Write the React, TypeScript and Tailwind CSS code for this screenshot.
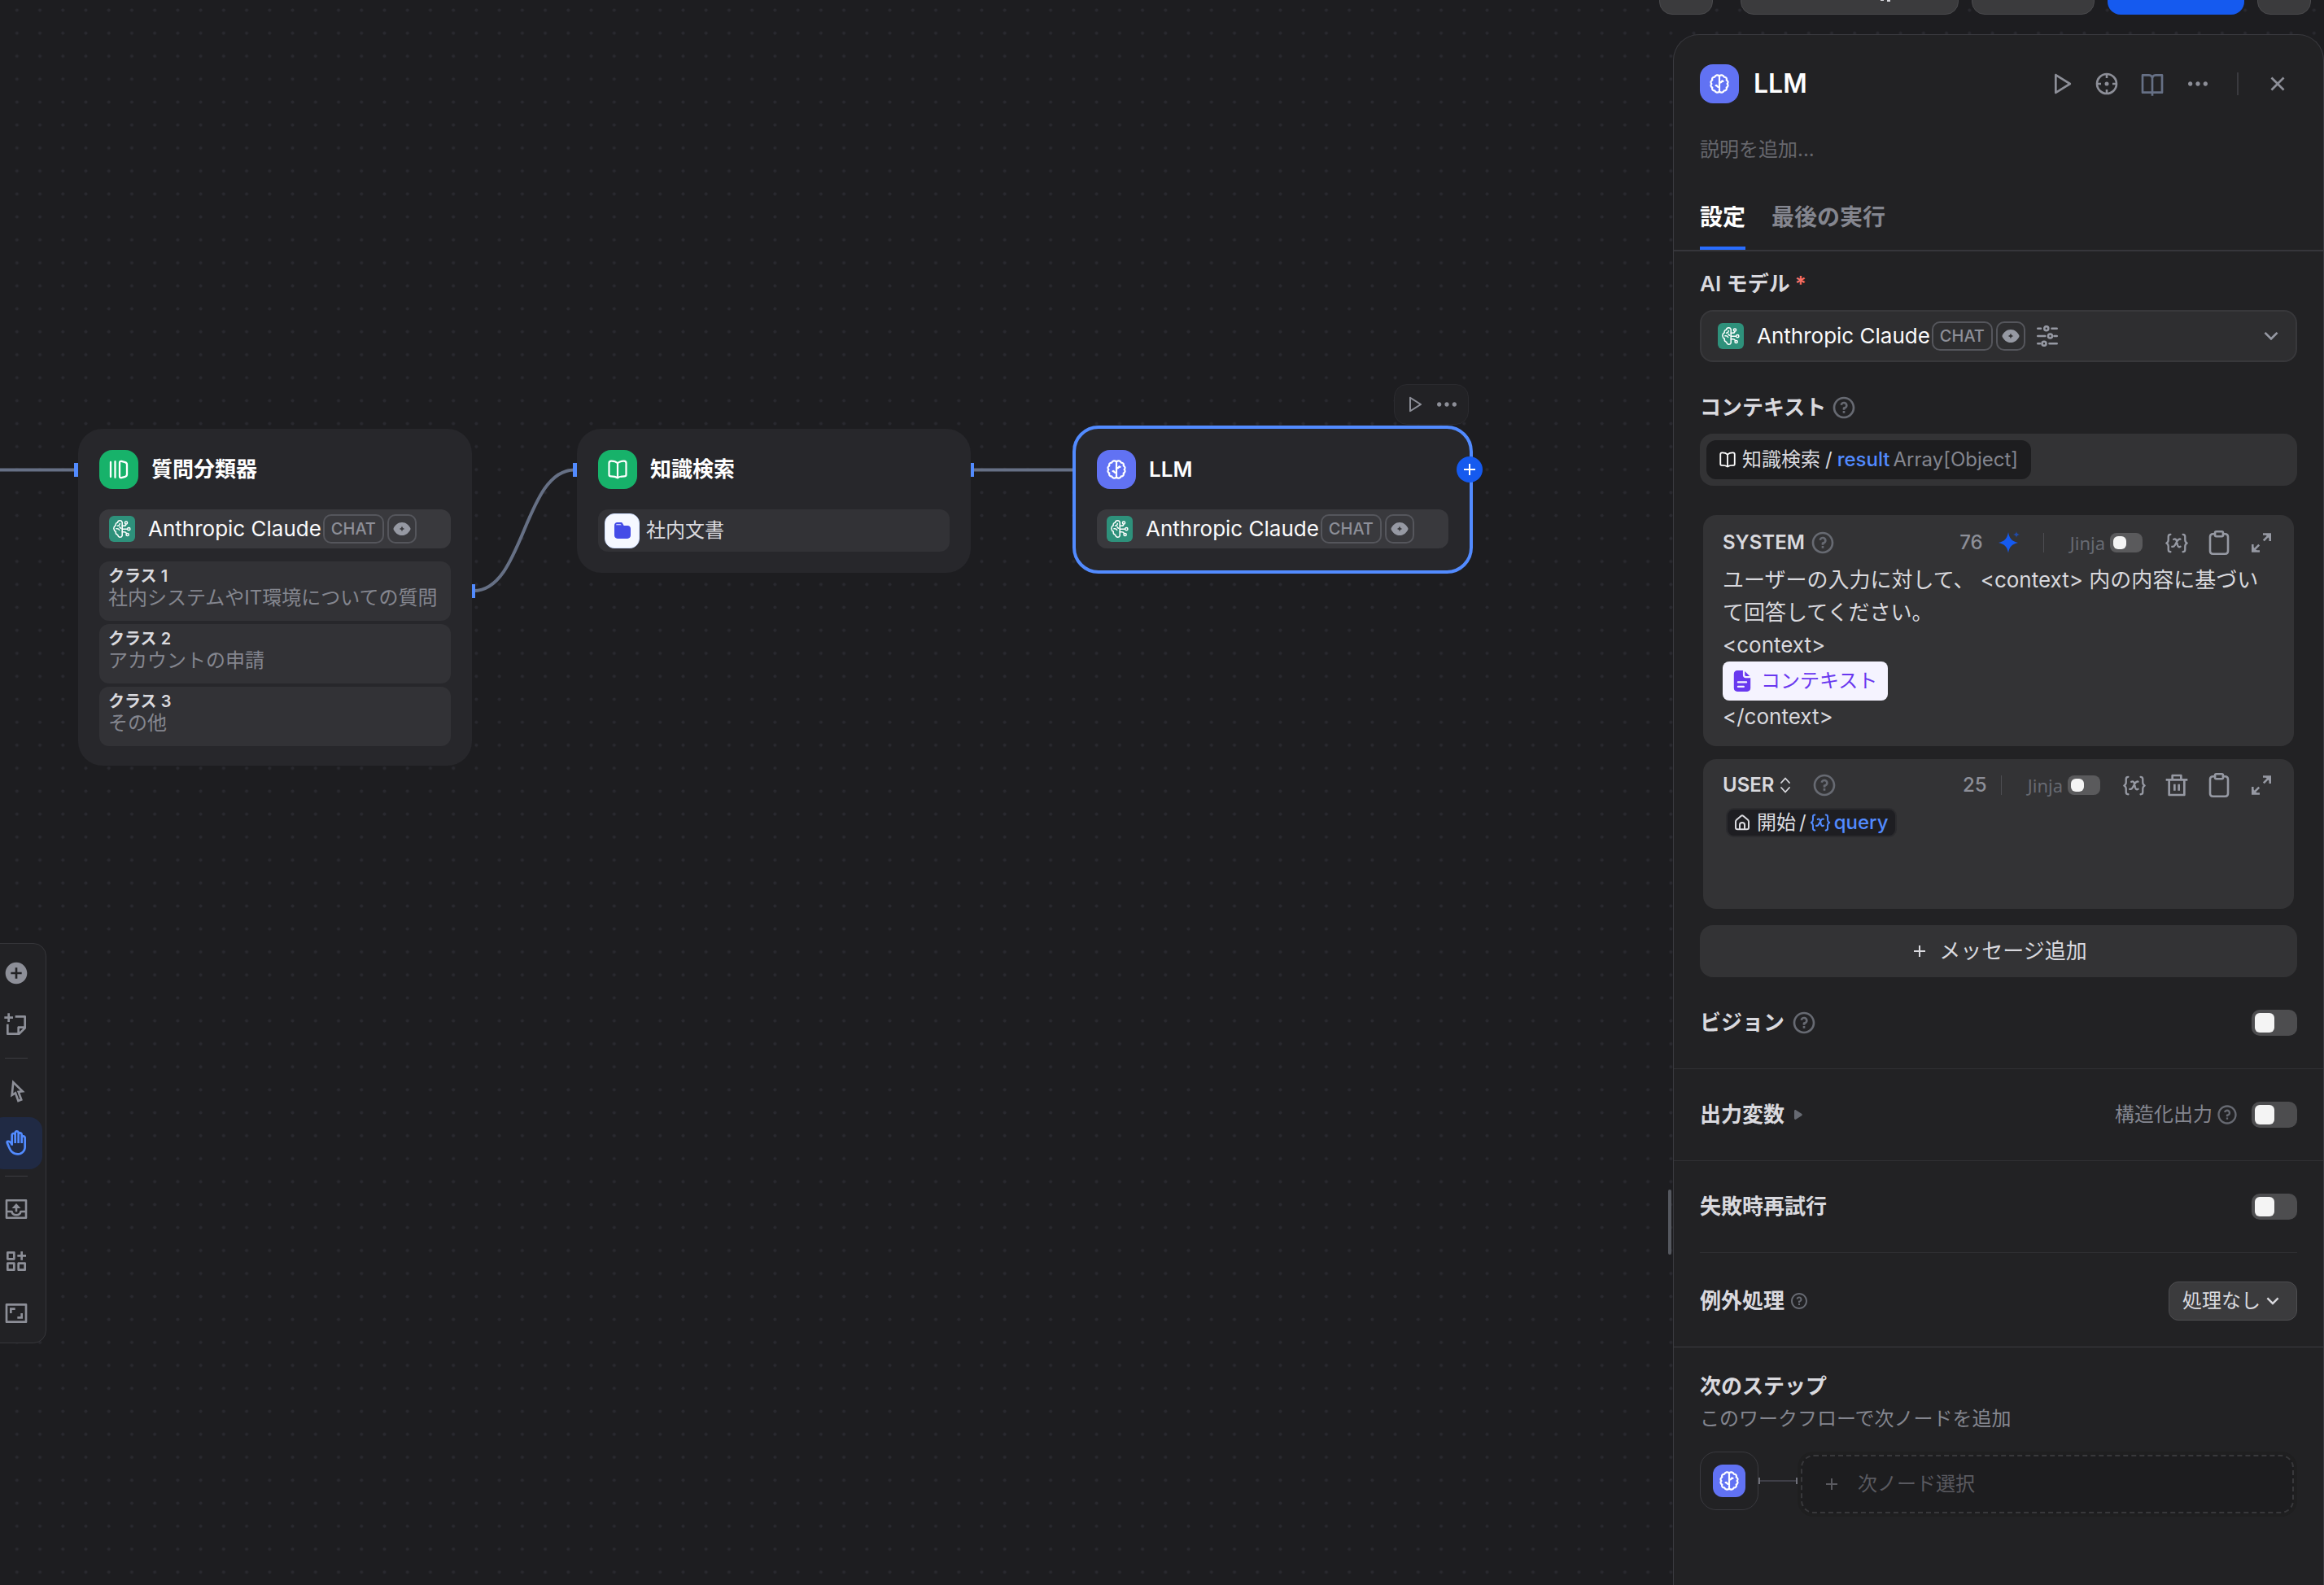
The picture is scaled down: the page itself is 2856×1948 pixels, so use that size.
import React from "react";
import {
  RiAddCircleFill,
  RiAddLine,
  RiArrowDownSLine,
  RiAspectRatioLine,
  RiBookOpenLine,
  RiCloseLine,
  RiCursorLine,
  RiDeleteBinLine,
  RiFunctionAddLine,
  RiHand,
  RiMoreFill,
  RiPlayLargeLine,
  RiQuestionLine,
  RiStickyNoteAddLine,
} from "react-icons/ri";

type IconProps = { className?: string };

function BrainIcon({ className }: IconProps) {
  return (
    <svg viewBox="0 0 24 24" className={className} fill="none" stroke="currentColor" strokeWidth="2.200" strokeLinecap="round" strokeLinejoin="round" aria-hidden="true">
      <path d="M12 2.400C10.200.8 7.200 1 6.200 3.600 3.900 3.500 2.600 5.300 3.300 7.400 1.300 8.200.9 10.600 2.400 12 .9 13.400 1.300 15.800 3.300 16.600c-.7 2.100.6 3.900 2.900 3.800C7.200 23 10.200 23.200 12 21.600c1.800 1.600 4.800 1.400 5.800-1.200 2.300.1 3.600-1.700 2.900-3.800 2-.8 2.400-3.200.9-4.600 1.500-1.400 1.100-3.800-.9-4.600.7-2.100-.6-3.900-2.900-3.800C16.800 1 13.800.8 12 2.400Z" />
      <path d="M12 2.400v19.200M12 10.500c1.700 0 2.900-.8 3.400-2.200M12 16.200c-1.700 0-2.900-.8-3.400-2.200M15.600 8.800h1M7.600 14.200h1" />
    </svg>
  );
}

function ModelIcon({ className }: IconProps) {
  return (
    <svg viewBox="0 0 22 22" className={className} fill="none" stroke="currentColor" strokeWidth="1.500" strokeLinecap="round" strokeLinejoin="round" aria-hidden="true">
      <path d="M11.200 2.800C10.600 1.200 9.600.8 8.500.8 6.800.8 5.700 1.900 5.600 3.200 3.800 3.400 2.800 5 3.200 6.800 1.300 7.600.7 9.300.9 11c.2 1.800 1.200 2.900 2.400 3.300-.4 1.900.7 3.600 2.400 4.100.3 1.700 1.400 2.800 2.900 2.800 1.300 0 2.200-.6 2.600-1.700V2.800Z" />
      <path d="M8.300 4.500c-.2 1.600-1.100 2.600-2.700 2.800M4 10.800c1.600-.3 3 .3 3.700 1.700M8 8.500c.2 1 .8 1.600 1.700 1.800" />
      <path d="M11.200 7.300h2.300c1.600 0 2.300-.7 2.300-1.800M11.200 11.200h6.300M11.200 14.800h2.300c1.600 0 2.400.6 2.900 1.600" />
      <circle cx="16" cy="3.500" r="1.600" />
      <circle cx="19.300" cy="11.200" r="1.600" />
      <circle cx="17.600" cy="18" r="1.600" />
    </svg>
  );
}

function OpenBookIcon({ className }: IconProps) {
  return (
    <svg viewBox="0 0 24 24" className={className} fill="none" stroke="currentColor" strokeWidth="2.200" strokeLinecap="round" strokeLinejoin="round" aria-hidden="true">
      <path d="M12 4.300C9.800 2.200 6.800 1.600 4 1.700 2.500 1.800 1.500 2.800 1.500 4.200v14c0 1.300.9 2.100 2.200 2.100 2.900 0 5.900.3 8.300 2 2.400-1.700 5.400-2 8.300-2 1.300 0 2.200-.8 2.200-2.100v-14c0-1.400-1-2.400-2.500-2.500-2.800-.1-5.800.5-8 2.600Zm0 0v18" />
    </svg>
  );
}

function ClassifierIcon({ className }: IconProps) {
  return (
    <svg viewBox="0 0 24 24" className={className} fill="none" stroke="currentColor" strokeWidth="2.300" strokeLinecap="round" strokeLinejoin="round" aria-hidden="true">
      <path d="M2 3v18M7.500 2.200v19.600M13 3.700c0-1.400 1-2.100 2.300-1.800l4.500 1.200c1.300.4 2.200 1.400 2.200 2.800v12.200c0 1.400-.9 2.400-2.200 2.800l-4.500 1.200c-1.300.3-2.300-.4-2.300-1.800V3.700Z" />
    </svg>
  );
}

function EyeIcon({ className }: IconProps) {
  return (
    <svg viewBox="0 0 24 18" className={className} fill="currentColor" aria-hidden="true">
      <path fillRule="evenodd" d="M12 0c5.600 0 9.600 4 11.600 8 .3.600.3 1.400 0 2-2 4-6 8-11.600 8S2.400 14 .4 10c-.3-.6-.3-1.400 0-2C2.400 4 6.400 0 12 0Zm0 5.200c-.5 2.200-1.600 3.300-3.800 3.800 2.200.5 3.300 1.600 3.800 3.800.5-2.200 1.600-3.300 3.800-3.800-2.200-.5-3.300-1.600-3.800-3.800Z" />
    </svg>
  );
}

function FolderIcon({ className }: IconProps) {
  return (
    <svg viewBox="0 0 24 24" className={className} fill="#444ce7" aria-hidden="true">
      <path fillRule="evenodd" d="M4.200 0h5.200c1.300 0 2.300.6 2.900 1.700L14 4.800h5.500C22 4.800 24 6.800 24 9.300v10c0 2.700-2 4.700-4.600 4.700H4.600C2 24 0 22 0 19.300V4.200C0 1.900 1.900 0 4.200 0Zm-.4 2.600c-.8 0-1.300.6-1.300 1.400h8l-.5-.8c-.2-.4-.6-.6-1.100-.6H3.800Z" />
    </svg>
  );
}

function DocIcon({ className }: IconProps) {
  return (
    <svg viewBox="0 0 22 28" className={className} aria-hidden="true">
      <path d="M4.500 0H12v6.500C12 8.400 13.600 10 15.500 10H22v13.500C22 26 20 28 17.500 28h-13C2 28 0 26 0 23.500v-19C0 2 2 0 4.500 0Z" fill="#6938ef" />
      <path d="M14.500 1v5.300c0 .7.500 1.200 1.200 1.200H21L14.500 1Z" fill="#6938ef" />
      <path d="M5.500 15.500h11M5.500 21.500h7.500" stroke="#f5f3ff" strokeWidth="2.400" strokeLinecap="round" />
    </svg>
  );
}

function HomeIcon({ className }: IconProps) {
  return (
    <svg viewBox="0 0 20 20" className={className} fill="none" stroke="currentColor" strokeWidth="2" strokeLinecap="round" strokeLinejoin="round" aria-hidden="true">
      <path d="M2 8.800c0-.9.400-1.700 1.100-2.300l5.400-4.600c.9-.8 2.100-.8 3 0l5.400 4.600c.7.600 1.100 1.400 1.100 2.300v7.200c0 1.300-.9 2.200-2.200 2.200H4.200C2.900 18.200 2 17.300 2 16V8.800Z" />
      <path d="M7 18v-5.300c0-1.600 1.300-2.700 3-2.700s3 1.100 3 2.700V18" />
    </svg>
  );
}

function VariableIcon({ className }: IconProps) {
  return (
    <svg viewBox="0 0 32 28" className={className} fill="none" stroke="currentColor" strokeWidth="2.600" strokeLinecap="round" strokeLinejoin="round" aria-hidden="true">
      <path d="M7.500 2C5 2 4.500 3.200 4.500 5v4.500c0 2.200-1 3.700-2.700 4.500 1.700.8 2.700 2.300 2.700 4.500V23c0 1.800.5 3 3 3M24.500 2c2.500 0 3 1.200 3 3v4.500c0 2.200 1 3.700 2.700 4.500-1.700.8-2.700 2.300-2.700 4.500V23c0 1.800-.5 3-3 3" />
      <path d="M11.800 8.800c2.400-1.300 3.400 0 4 2.200l1.300 5.500c.6 2.300 1.800 3.600 4 2.200M21 8.500c-1.800-.5-3 .5-4.100 2.300l-3.400 6c-1 1.700-2.200 2.600-3.900 2" />
    </svg>
  );
}

function ClipboardIcon({ className }: IconProps) {
  return (
    <svg viewBox="0 0 32 32" className={className} fill="none" stroke="currentColor" strokeWidth="2.600" strokeLinecap="round" strokeLinejoin="round" aria-hidden="true">
      <path d="M11 5.200H8.500C6.300 5.200 5 6.500 5 8.700v17.600c0 2.200 1.300 3.500 3.500 3.500h15c2.200 0 3.500-1.300 3.500-3.500V8.700c0-2.200-1.300-3.500-3.500-3.500H21" />
      <rect x="11" y="2.200" width="10" height="6" rx="1.600" />
    </svg>
  );
}

function ExpandIcon({ className }: IconProps) {
  return (
    <svg viewBox="0 0 32 32" className={className} fill="none" stroke="currentColor" strokeWidth="2.600" aria-hidden="true">
      <path d="M18 5.500h8.700V14M26.500 5.700l-7.700 7.700M14 26.500H5.300V18M5.500 26.300l7.700-7.700" />
      <path d="M20 5l7 0v7zM12 27H5v-7z" fill="currentColor" stroke="none" />
    </svg>
  );
}

function CrosshairIcon({ className }: IconProps) {
  return (
    <svg viewBox="0 0 32 32" className={className} fill="none" stroke="currentColor" strokeWidth="2.600" aria-hidden="true">
      <circle cx="16" cy="16" r="12" />
      <path d="M16 4v5M16 23v5M4 16h5M23 16h5" />
      <circle cx="16" cy="16" r="2.500" fill="currentColor" stroke="none" />
    </svg>
  );
}

function SlidersIcon({ className }: IconProps) {
  return (
    <svg viewBox="0 0 26 26" className={className} fill="none" stroke="currentColor" strokeWidth="2.600" strokeLinecap="round" aria-hidden="true">
      <path d="M1.300 3.700H5M18.500 3.700h6.200M1.300 13h9M21.500 13h3.200M1.300 22.300H4M15.500 22.300h9.200" />
      <circle cx="11.800" cy="3.700" r="2.500" />
      <circle cx="16.500" cy="13" r="2.500" />
      <circle cx="9" cy="22.300" r="2.500" />
    </svg>
  );
}

function SparkleIcon({ className }: IconProps) {
  return (
    <svg viewBox="0 0 32 32" className={className} fill="#155aef" aria-hidden="true">
      <path d="M15 3c1.300 7.600 4.400 11.300 12 13-7.600 1.700-10.700 5.200-12 12.500C13.700 21.200 10.600 17.700 3 16c7.600-1.700 10.700-5.400 12-13Z" />
      <path opacity=".6" d="M25 2c.4 2.600 1.500 3.600 4 4-2.500.4-3.600 1.400-4 4-.4-2.600-1.500-3.600-4-4 2.500-.4 3.600-1.400 4-4Z" />
    </svg>
  );
}

function UpDownIcon({ className }: IconProps) {
  return (
    <svg viewBox="0 0 16 20" className={className} fill="none" stroke="currentColor" strokeWidth="1.800" strokeLinecap="round" strokeLinejoin="round" aria-hidden="true">
      <path d="M3 7l5-5.500L13 7M3 13l5 5.500 5-5.500" />
    </svg>
  );
}

function ExportIcon({ className }: IconProps) {
  return (
    <svg viewBox="0 0 32 32" className={className} fill="none" stroke="currentColor" strokeWidth="2.600" strokeLinejoin="round" aria-hidden="true">
      <rect x="4" y="5.300" width="24" height="21.400" />
      <path d="M4 19h6.500c.5 2.600 2.700 4.300 5.500 4.300s5-1.700 5.500-4.300H28" />
      <path d="M16 13v6.300" />
      <path d="M16 9l5.500 6h-11z" fill="currentColor" stroke="none" />
    </svg>
  );
}

function Help({ size = "size-8" }: { size?: string }) {
  return <RiQuestionLine className={`${size} shrink-0 text-[#676a72]`} aria-hidden="true" />;
}

function Toggle({ label, small = false }: { label: string; small?: boolean }) {
  return (
    <input
      type="checkbox"
      role="switch"
      aria-label={label}
      className={
        small
          ? "h-6 w-10 shrink-0 appearance-none rounded-lg bg-[#5a5a5c] p-1 before:block before:size-4 before:rounded-md before:bg-[#f4f4f4]"
          : "h-8 w-14 shrink-0 appearance-none rounded-[10px] bg-[#4d4d4f] p-1 before:block before:size-6 before:rounded-md before:bg-[#f4f4f4]"
      }
    />
  );
}

function ModelLabel() {
  return (
    <>
      <span className="flex size-8 shrink-0 items-center justify-center rounded-md bg-[#2e917b] text-white">
        <ModelIcon className="size-[22px]" />
      </span>
      <span className="ml-4 text-[26px] leading-8 whitespace-nowrap text-[#fbfbfc]">Anthropic Claude</span>
      <span className="ml-0.5 flex h-9 shrink-0 items-center rounded-[10px] border-2 border-[#55565c] px-2 text-[20px] leading-6 font-medium text-[#8d8f98]">
        CHAT
      </span>
      <span className="ml-1 flex h-9 w-9 shrink-0 items-center justify-center rounded-[10px] border-2 border-[#55565c] text-[#9699a3]">
        <EyeIcon className="h-4 w-[22px]" />
      </span>
    </>
  );
}

function NodeHeader({ title, color, children }: { title: string; color: string; children: React.ReactNode }) {
  return (
    <div className="flex h-12 items-center gap-4">
      <span className={`flex size-12 items-center justify-center rounded-2xl text-white ${color}`}>{children}</span>
      <h3 className="text-[26px] leading-8 font-semibold text-white">{title}</h3>
    </div>
  );
}

const classes = [
  { name: "クラス 1", text: "社内システムやIT環境についての質問" },
  { name: "クラス 2", text: "アカウントの申請" },
  { name: "クラス 3", text: "その他" },
];

function Canvas() {
  return (
    <main className="absolute inset-0">
      <svg className="absolute inset-0 size-full" aria-hidden="true">
        <defs>
          <pattern id="dots" x="6.700" y="-1.600" width="28.230" height="28.230" patternUnits="userSpaceOnUse">
            <circle cx="14.100" cy="14.100" r="2" fill="#29292f" />
          </pattern>
        </defs>
        <rect width="100%" height="100%" fill="url(#dots)" />
        <g fill="none" stroke="#667085" strokeWidth="4">
          <path d="M0 577.500H94" />
          <path d="M582 726C644 726 644 577.500 706 577.500" />
          <path d="M1195 577.500H1320" />
        </g>
        <g fill="#528bff">
          <rect x="91" y="569" width="5" height="17" />
          <rect x="579" y="718" width="5" height="17" />
          <rect x="704" y="569" width="5" height="17" />
          <rect x="1192" y="569" width="5" height="17" />
        </g>
      </svg>

      <section className="absolute top-[527px] left-[96px] w-[484px] rounded-[30px] bg-[#27272b] p-[26px] pb-6">
        <NodeHeader title="質問分類器" color="bg-[#17b26a]">
          <ClassifierIcon className="size-6" />
        </NodeHeader>
        <div className="mt-[25px] flex h-12 items-center rounded-xl bg-[#39393d] px-3">
          <ModelLabel />
        </div>
        <ul className="mt-4 flex flex-col gap-1">
          {classes.map((c) => (
            <li key={c.name} className="h-[73px] rounded-xl bg-[#323236] px-[11px] pt-1.5">
              <p className="text-[20px] leading-6 font-semibold text-[#d9d9de]">{c.name}</p>
              <p className="text-[24px] leading-[30px] whitespace-nowrap text-[#84868f]">{c.text}</p>
            </li>
          ))}
        </ul>
      </section>

      <section className="absolute top-[527px] left-[709px] w-[484px] rounded-[30px] bg-[#27272b] p-[26px]">
        <NodeHeader title="知識検索" color="bg-[#17b26a]">
          <OpenBookIcon className="size-6" />
        </NodeHeader>
        <div className="mt-[25px] flex h-[52px] items-center gap-2 rounded-xl bg-[#323236] px-2">
          <span className="flex size-[43px] items-center justify-center rounded-xl border border-[#d1e0ff] bg-[#f5f8ff]">
            <FolderIcon className="h-5 w-[22px]" />
          </span>
          <span className="text-[24px] leading-8 text-[#d9d9de]">社内文書</span>
        </div>
      </section>

      <div className="absolute top-[472px] left-[1713px] flex h-[50px] w-[92px] items-center justify-between rounded-2xl border border-[#2b2b2f] bg-[#222225] px-2.5 text-[#8d8f98]">
        <button type="button" aria-label="実行" className="flex size-7 items-center justify-center">
          <RiPlayLargeLine className="size-6" />
        </button>
        <button type="button" aria-label="その他" className="flex size-8 items-center justify-center">
          <RiMoreFill className="size-8" />
        </button>
      </div>
      <section className="absolute top-[523px] left-[1318px] w-[492px] rounded-[32px] border-4 border-[#528bff] bg-[#27272b] px-[26px] pt-[26px] pb-[27px]">
        <NodeHeader title="LLM" color="bg-[#6172f3]">
          <BrainIcon className="size-6" />
        </NodeHeader>
        <div className="mt-[25px] flex h-12 items-center rounded-xl bg-[#39393d] px-3">
          <ModelLabel />
        </div>
      </section>
      <button type="button" aria-label="次のノードを追加" className="absolute top-[561px] left-[1790px] flex size-8 items-center justify-center rounded-full bg-[#155aef] text-white">
        <RiAddLine className="size-6" />
      </button>
    </main>
  );
}

function ToolButton({ label, active = false, children }: { label: string; active?: boolean; children: React.ReactNode }) {
  return (
    <button
      type="button"
      aria-label={label}
      className={`flex size-16 items-center justify-center rounded-2xl ${active ? "bg-[#202a44] text-[#528bff]" : "text-[#8d8f98]"}`}
    >
      {children}
    </button>
  );
}

function Toolbar() {
  return (
    <aside className="absolute bottom-[297px] -left-[17px] rounded-2xl border border-[#36363a] bg-[#222225] p-1">
      <ToolButton label="ノードを追加"><RiAddCircleFill className="size-8" /></ToolButton>
      <ToolButton label="メモを追加"><RiStickyNoteAddLine className="size-8" /></ToolButton>
      <hr className="mx-[18px] my-2 border-[#3c3c40]" />
      <ToolButton label="ポインター"><RiCursorLine className="size-8" /></ToolButton>
      <ToolButton label="ハンド" active><RiHand className="size-8" /></ToolButton>
      <hr className="mx-[18px] my-2 border-[#3c3c40]" />
      <ToolButton label="画像を書き出す"><ExportIcon className="size-8" /></ToolButton>
      <ToolButton label="ノードを整理"><RiFunctionAddLine className="size-8" /></ToolButton>
      <ToolButton label="最大化"><RiAspectRatioLine className="size-8" /></ToolButton>
    </aside>
  );
}

function TopBar() {
  const base = "h-16 shrink-0 rounded-2xl";
  const gray = "border border-[#4a4a4d] bg-[#3d3d3fee]";
  return (
    <header className="relative flex h-[18px] items-end justify-end gap-4 overflow-hidden pr-4">
      <button type="button" aria-label="環境変数" className={`${base} ${gray} mr-[18px] w-[66px]`} />
      <button type="button" aria-label="プレビュー" className={`${base} ${gray} flex w-[268px] items-end`}>
        <svg viewBox="0 0 14 2" className="mb-[15px] ml-[170px] h-0.5 w-3.5" fill="#d9d9de" aria-hidden="true">
          <path d="M1 0h4v1H1zM9 0h4v2H9z" />
        </svg>
      </button>
      <button type="button" aria-label="機能" className={`${base} ${gray} w-[151px]`} />
      <button type="button" aria-label="公開する" className={`${base} w-[168px] bg-[#155aef]`} />
      <button type="button" aria-label="履歴" className={`${base} ${gray} w-[66px]`} />
    </header>
  );
}

function IconButton({ label, children }: { label: string; children: React.ReactNode }) {
  return (
    <button type="button" aria-label={label} className="flex size-12 shrink-0 items-center justify-center">
      {children}
    </button>
  );
}

const labelText = "text-[26px] leading-8 font-semibold text-[#d9d9de]";

function PromptTools({ count, role, ai = false, removable = false }: { count: number; role: string; ai?: boolean; removable?: boolean }) {
  return (
    <div className="ml-auto flex items-center text-[#9699a3]">
      <span className="text-[24px] leading-8 font-medium text-[#8d8f98]">{count}</span>
      {ai && (
        <button type="button" aria-label="プロンプトを生成" className="ml-4">
          <SparkleIcon className="size-8" />
        </button>
      )}
      <span className={`h-6 w-px bg-[#4e4e52] ${ai ? "ml-[26px]" : "ml-[17px]"}`} />
      <label className="ml-8 flex items-center gap-1.5 font-['Noto_Sans'] text-[22px] leading-6 text-[#676a72]">
        Jinja
        <Toggle small label={`${role} Jinja`} />
      </label>
      <div className="ml-[26px] flex items-center gap-5">
        <button type="button" aria-label="変数を挿入"><VariableIcon className="h-[25px] w-8" /></button>
        {removable && (
          <button type="button" aria-label="削除"><RiDeleteBinLine className="size-8" /></button>
        )}
        <button type="button" aria-label="コピー"><ClipboardIcon className="size-8" /></button>
        <button type="button" aria-label="拡大"><ExpandIcon className="size-8" /></button>
      </div>
    </div>
  );
}

function SettingRow({ title, extra, children }: { title: string; extra?: React.ReactNode; children: React.ReactNode }) {
  return (
    <div className="flex h-28 items-center px-8">
      <span className={labelText}>{title}</span>
      {extra}
      <div className="ml-auto flex items-center">{children}</div>
    </div>
  );
}

function Panel() {
  return (
    <section className="w-[800px] shrink-0 rounded-t-[32px] border border-b-0 border-[#3a3a3f] bg-[#222224] pt-9">
      <div className="flex h-12 items-center px-8">
        <span className="flex size-12 items-center justify-center rounded-2xl bg-[#6172f3] text-white">
          <BrainIcon className="size-6" />
        </span>
        <h2 className="ml-[18px] text-[32px] leading-10 font-semibold text-white">LLM</h2>
        <div className="ml-auto flex items-center gap-2 text-[#8d8f98]">
          <IconButton label="実行"><RiPlayLargeLine className="size-8" /></IconButton>
          <IconButton label="変数を検査"><CrosshairIcon className="size-8" /></IconButton>
          <a href="#help" aria-label="ヘルプ" className="flex size-12 items-center justify-center text-[#667085]">
            <RiBookOpenLine className="size-8" />
          </a>
          <IconButton label="その他"><RiMoreFill className="size-8" /></IconButton>
        </div>
        <span className="mx-6 h-7 w-0.5 bg-[#3a3a3f]" />
        <span className="text-[#8d8f98]">
          <IconButton label="閉じる"><RiCloseLine className="size-8" /></IconButton>
        </span>
      </div>
      <div className="mt-8 px-8">
        <input
          aria-label="説明"
          placeholder="説明を追加..."
          className="h-12 w-full bg-transparent text-[24px] leading-8 placeholder:text-[#66676d] focus:outline-none"
        />
      </div>
      <div role="tablist" className="mt-5 flex gap-8 border-b-2 border-[#36363b] px-8 text-[28px] leading-8 font-semibold">
        <button type="button" role="tab" aria-selected="true" className="h-20 border-y-4 border-t-transparent border-b-[#296dff] text-white">
          設定
        </button>
        <button type="button" role="tab" aria-selected="false" className="h-20 border-y-4 border-transparent text-[#84868f]">
          最後の実行
        </button>
      </div>

      <div className="px-8 pt-4">
        <div className="flex h-12 items-center gap-1.5">
          <span className={labelText}>AI モデル</span>
          <span className="text-[26px] leading-8 font-semibold text-[#f97066]">*</span>
        </div>
        <div className="mt-2 flex h-16 items-center rounded-2xl border-2 border-[#38383b] bg-[#2e2e30] px-5">
          <button type="button" aria-haspopup="listbox" className="flex h-full flex-1 items-center">
            <ModelLabel />
            <SlidersIcon className="ml-[14px] size-[26px] text-[#9699a3]" />
            <RiArrowDownSLine className="mr-[-6px] ml-auto size-8 text-[#9699a3]" />
          </button>
        </div>

        <div className="mt-8 flex h-12 items-center gap-1.5">
          <span className={labelText}>コンテキスト</span>
          <Help />
        </div>
        <button type="button" className="mt-2 flex h-16 w-full items-center rounded-2xl bg-[#333335] px-2">
          <span className="flex h-12 items-center rounded-xl bg-[#1d1d1f] px-4 text-[24px] leading-8 text-[#d9d9de]">
            <OpenBookIcon className="mr-2 size-5 text-white" />
            知識検索
            <span className="mx-1.5">/</span>
            <span className="font-medium text-[#528bff]">result</span>
            <span className="ml-1 text-[#84868f]">Array[Object]</span>
          </span>
        </button>

        <div className="mx-1 mt-9 rounded-2xl bg-[#333335] px-6 pt-3 pb-4">
          <div className="flex h-11 items-center">
            <span className="text-[24px] leading-8 font-semibold text-[#d9d9de]">SYSTEM</span>
            <span className="ml-1.5"><Help /></span>
            <PromptTools count={76} role="SYSTEM" ai />
          </div>
          <div role="textbox" aria-label="SYSTEM プロンプト" className="mt-1 text-[26px] leading-10 text-[#d9d9de]">
            <p>ユーザーの入力に対して、 &lt;context&gt; 内の内容に基づいて回答してください。</p>
            <p>&lt;context&gt;</p>
            <p className="flex">
              <span className="flex h-12 items-center gap-3 rounded-lg bg-[#f5f3ff] px-[13px] text-[24px] leading-8 text-[#6938ef]">
                <DocIcon className="h-[26px] w-[22px]" />
                コンテキスト
              </span>
            </p>
            <p>&lt;/context&gt;</p>
          </div>
        </div>

        <div className="mx-1 mt-4 min-h-[184px] rounded-2xl bg-[#333335] px-6 pt-2.5">
          <div className="flex h-11 items-center">
            <button type="button" aria-haspopup="listbox" className="flex items-center gap-1.5 text-[24px] leading-8 font-semibold text-[#d9d9de]">
              USER
              <UpDownIcon className="h-7 w-4" />
            </button>
            <span className="ml-6"><Help /></span>
            <PromptTools count={25} role="USER" removable />
          </div>
          <div role="textbox" aria-label="USER プロンプト" className="mt-1 flex h-10 items-center px-1">
            <span className="flex h-9 items-center rounded-[10px] border-2 border-[#2b2b2e] bg-[#1e1e22] px-2 text-[24px] leading-8 text-[#d9d9de]">
              <HomeIcon className="mr-2 size-5" />
              開始
              <span className="mx-1">/</span>
              <VariableIcon className="mr-1 h-[22px] w-[26px] text-[#528bff]" />
              <span className="font-medium text-[#528bff]">query</span>
            </span>
          </div>
        </div>

        <button type="button" className="mt-5 flex h-16 w-full items-center justify-center gap-3 rounded-2xl bg-[#333335] text-[26px] leading-8 text-[#d9d9de]">
          <RiAddLine className="size-6" />
          メッセージ追加
        </button>
      </div>

      <SettingRow title="ビジョン" extra={<span className="ml-2"><Help /></span>}>
        <Toggle label="ビジョン" />
      </SettingRow>
      <hr className="border-[#303033]" />
      <SettingRow
        title="出力変数"
        extra={
          <svg viewBox="0 0 10 12" className="ml-3 h-3 w-2.5" fill="#676a72" aria-hidden="true">
            <path d="M0 1.500C0 .3 1.300-.3 2.300.4l6.700 4.300c1 .7 1 1.900 0 2.600l-6.700 4.300C1.300 12.300 0 11.700 0 10.500Z" />
          </svg>
        }
      >
        <span className="mr-1 text-[24px] leading-8 text-[#84868f]">構造化出力</span>
        <Help size="size-7" />
        <span className="ml-4 flex"><Toggle label="構造化出力" /></span>
      </SettingRow>
      <hr className="border-[#303033]" />
      <SettingRow title="失敗時再試行">
        <Toggle label="失敗時再試行" />
      </SettingRow>
      <hr className="mx-8 border-[#303033]" />
      <div className="flex items-center px-8 pt-[35px] pb-8">
        <label htmlFor="error-strategy" className={labelText}>例外処理</label>
        <span className="ml-1.5"><Help size="size-6" /></span>
        <span className="relative ml-auto">
          <select
            id="error-strategy"
            className="h-12 w-[158px] appearance-none rounded-xl border border-[#4d4d50] bg-[#3b3b3d] pl-4 text-[24px] leading-8 text-[#d9d9de]"
          >
            <option>処理なし</option>
          </select>
          <RiArrowDownSLine className="pointer-events-none absolute top-2.5 right-4 size-7 text-[#d9d9de]" />
        </span>
      </div>

      <div className="border-t border-[#3c3c40] px-8 pt-6">
        <h4 className="text-[26px] leading-[48px] font-semibold text-[#d9d9de]">次のステップ</h4>
        <p className="text-[24px] leading-8 text-[#84868f]">このワークフローで次ノードを追加</p>
        <div className="mt-6 flex items-start">
          <span className="flex size-[72px] items-center justify-center rounded-[20px] border border-[#3a3a3f]">
            <span className="flex size-10 items-center justify-center rounded-xl bg-[#6172f3] text-white">
              <BrainIcon className="size-6" />
            </span>
          </span>
          <svg viewBox="0 0 48 72" className="h-[72px] w-12 shrink-0" aria-hidden="true">
            <path d="M1 36h46" stroke="#3f3f48" strokeWidth="2" />
            <path d="M1 32v8M47 32v8" stroke="#6f7079" strokeWidth="2" />
          </svg>
          <div className="flex-1 rounded-[20px] bg-[#1f1f20] p-1">
            <button type="button" className="flex h-[72px] w-full items-center gap-5 rounded-2xl border-2 border-dashed border-[#38383b] bg-[#1d1d1f] px-6 text-[24px] leading-8 text-[#5a5a60]">
              <RiAddLine className="size-6" />
              次ノード選択
            </button>
          </div>
        </div>
      </div>
    </section>
  );
}

export default function App() {
  return (
    <div className="relative flex h-screen flex-col overflow-hidden bg-[#1d1d20] font-['Inter','Noto_Sans_CJK_JP',sans-serif]">
      <Canvas />
      <TopBar />
      <div className="pointer-events-none relative mt-6 flex min-h-0 flex-1 justify-end gap-0.5 *:pointer-events-auto">
        <div role="separator" aria-orientation="vertical" className="mt-[1420px] h-20 w-1 rounded-full bg-[#55585f]" />
        <Panel />
      </div>
      <Toolbar />
    </div>
  );
}
